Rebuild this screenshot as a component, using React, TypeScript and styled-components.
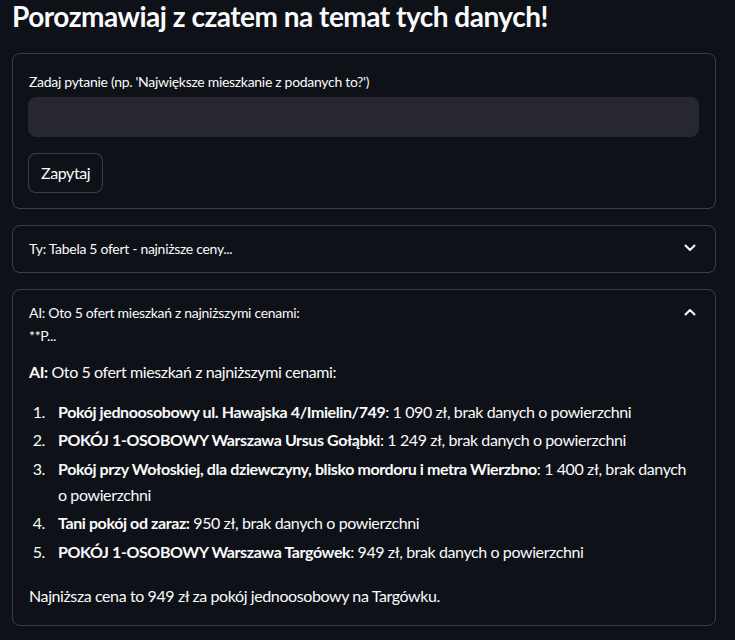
import styled, { createGlobalStyle } from 'styled-components';

const GlobalStyle = createGlobalStyle`
  html, body {
    margin: 0;
    padding: 0;
    background: #0e1117;
  }
  body {
    font-family: Lato, "Noto Sans", sans-serif;
    color: #fafafa;
  }
`;

const offers = [
  { name: 'Pokój jednoosobowy ul. Hawajska 4/Imielin/749', rest: ': 1 090 zł, brak danych o powierzchni' },
  { name: 'POKÓJ 1-OSOBOWY Warszawa Ursus Gołąbki', rest: ': 1 249 zł, brak danych o powierzchni' },
  {
    name: 'Pokój przy Wołoskiej, dla dziewczyny, blisko mordoru i metra Wierzbno',
    rest: ': 1 400 zł, brak danych o powierzchni',
  },
  { name: 'Tani pokój od zaraz:', rest: ' 950 zł, brak danych o powierzchni' },
  { name: 'POKÓJ 1-OSOBOWY Warszawa Targówek', rest: ': 949 zł, brak danych o powierzchni' },
];

function Chevron({ up }: { up?: boolean }) {
  return (
    <svg width="12" height="8" viewBox="0 0 12 8" fill="none">
      <path
        d={up ? 'M1.5 6.5L6 2l4.5 4.5' : 'M1.5 1.5L6 6l4.5-4.5'}
        stroke="#fafafa"
        strokeWidth="2"
        strokeLinecap="round"
        strokeLinejoin="round"
      />
    </svg>
  );
}

export default function App() {
  return (
    <>
      <GlobalStyle />
      <Page>
        <Title>Porozmawiaj z czatem na temat tych danych!</Title>
        <FormBox>
          <Label>Zadaj pytanie (np. 'Największe mieszkanie z podanych to?')</Label>
          <Input />
          <Button>Zapytaj</Button>
        </FormBox>
        <Expander>
          <Summary>
            <span>Ty: Tabela 5 ofert - najniższe ceny...</span>
            <Chevron />
          </Summary>
        </Expander>
        <Expander>
          <Summary>
            <span>
              AI: Oto 5 ofert mieszkań z najniższymi cenami:
              <br />
              **P...
            </span>
            <Chevron up />
          </Summary>
          <Content>
            <p>
              <b>AI:</b> Oto 5 ofert mieszkań z najniższymi cenami:
            </p>
            <List>
              {offers.map((o) => (
                <li key={o.name}>
                  <span>
                    <b>{o.name}</b>
                    {o.rest}
                  </span>
                </li>
              ))}
            </List>
            <p>Najniższa cena to 949 zł za pokój jednoosobowy na Targówku.</p>
          </Content>
        </Expander>
      </Page>
    </>
  );
}

const Page = styled.div`
  padding: 0 19px 0 12px;
  display: flex;
  flex-direction: column;
  gap: 16px;
`;

const Title = styled.h3`
  margin: 0;
  padding: 0 0 3px;
  font-size: 28px;
  font-weight: 700;
  line-height: 1.2;
  letter-spacing: -0.5px;
  color: #fafafa;
`;

const FormBox = styled.div`
  border: 1px solid rgba(250, 250, 250, 0.2);
  border-radius: 8px;
  padding: 16px 16px 15px 15px;
  display: flex;
  flex-direction: column;
  align-items: flex-start;
`;

const Label = styled.label`
  font-size: 14px;
  line-height: 1.6;
  letter-spacing: -0.3px;
  margin: 1px 0 4px 1px;
`;

const Input = styled.div`
  align-self: stretch;
  height: 38px;
  background: #262730;
  border: 1px solid #262730;
  border-radius: 8px;
  margin-bottom: 16px;
`;

const Button = styled.button`
  font-family: inherit;
  font-size: 16px;
  letter-spacing: -0.4px;
  color: #fafafa;
  background: #0e1117;
  border: 1px solid rgba(250, 250, 250, 0.2);
  border-radius: 8px;
  height: 40px;
  padding: 0 12px;
`;

const Expander = styled.div`
  border: 1px solid rgba(250, 250, 250, 0.2);
  border-radius: 8px;
`;

const Summary = styled.div`
  display: flex;
  justify-content: space-between;
  align-items: flex-start;
  padding: 12px 19px 12px 16px;
  font-size: 14px;
  line-height: 1.6;
  letter-spacing: -0.3px;
  svg {
    margin-top: 6px;
  }
`;

const Content = styled.div`
  padding: 0 16px 16px;
  font-size: 16px;
  line-height: 1.6;
  letter-spacing: -0.4px;
  p {
    margin: 0 0 14px;
  }
  p:last-child {
    margin: 0;
  }
`;

const List = styled.ol`
  margin: 0 0 19px;
  padding: 0 8px 0 0;
  list-style: none;
  counter-reset: item;
  li {
    display: flex;
    margin-bottom: 3px;
    counter-increment: item;
  }
  li::before {
    content: counter(item) '.';
    flex: none;
    width: 16px;
    margin-right: 13px;
    text-align: right;
  }
`;
